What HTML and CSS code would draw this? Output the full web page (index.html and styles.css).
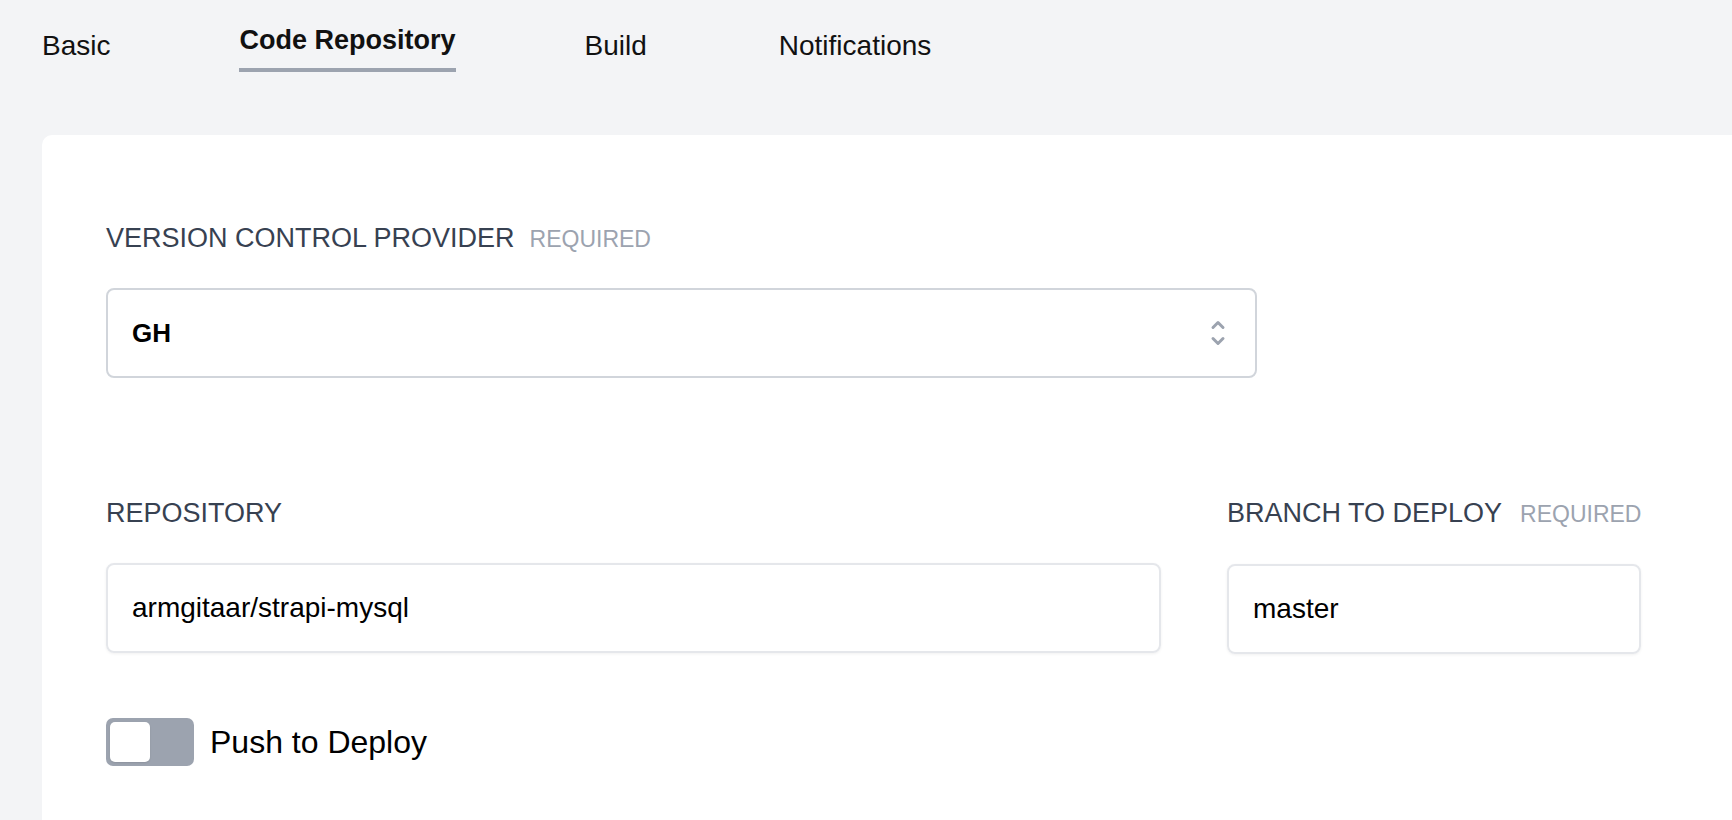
FILE: index.html
```html
<!DOCTYPE html>
<html lang="en">
<head>
<meta charset="utf-8">
<title>Code Repository</title>
<link rel="stylesheet" href="styles.css">
</head>
<body>
<div class="page">
  <nav class="tabs">
    <a class="tab">Basic</a>
    <a class="tab active">Code Repository</a>
    <a class="tab">Build</a>
    <a class="tab">Notifications</a>
  </nav>
  <section class="card">
    <div class="field provider">
      <label class="field-label">VERSION CONTROL PROVIDER <span class="req">REQUIRED</span></label>
      <div class="select">
        <span class="select-value">GH</span>
        <svg class="chevrons" width="16" height="30" viewBox="0 0 16 30" aria-hidden="true">
          <path d="M3 9.5 L8 4.5 L13 9.5" fill="none" stroke="#9ca3af" stroke-width="3" stroke-linecap="round" stroke-linejoin="round"/>
          <path d="M3 20.5 L8 25.5 L13 20.5" fill="none" stroke="#9ca3af" stroke-width="3" stroke-linecap="round" stroke-linejoin="round"/>
        </svg>
      </div>
    </div>
    <div class="row">
      <div class="field">
        <label class="field-label">REPOSITORY</label>
        <div class="input">armgitaar/strapi-mysql</div>
      </div>
      <div class="field">
        <label class="field-label">BRANCH TO DEPLOY <span class="req req-wide">REQUIRED</span></label>
        <div class="input">master</div>
      </div>
    </div>
    <div class="toggle-row">
      <div class="toggle"><div class="knob"></div></div>
      <span class="toggle-label">Push to Deploy</span>
    </div>
  </section>
</div>
</body>
</html>
```
FILE: styles.css
```css
html, body {
  margin: 0;
  padding: 0;
}
body {
  background: #f3f4f6;
  font-family: "Liberation Sans", Arial, sans-serif;
  color: #111;
  overflow: hidden;
}
.page {
  min-height: 820px;
}
.tabs {
  display: flex;
  align-items: flex-start;
  padding: 29px 0 0 42px;
  height: 106px;
}
.tab {
  font-size: 28px;
  line-height: 34px;
  color: #111;
  margin-right: 129px;
}
.tab:nth-child(3) {
  margin-right: 132px;
}
.tab.active {
  font-size: 27px;
  font-weight: 700;
  margin-top: -6px;
  padding-bottom: 11px;
  border-bottom: 4px solid #9ca3af;
}
.card {
  margin-left: 42px;
  background: #fff;
  border-radius: 10px 0 0 0;
  padding: 88px 0 0 64px;
  min-height: 685px;
  box-sizing: border-box;
}
.field {
  display: flex;
  flex-direction: column;
  gap: 35px;
}
.field-label {
  display: flex;
  align-items: baseline;
  gap: 15px;
  font-size: 27px;
  line-height: 30px;
  color: #374151;
  white-space: nowrap;
}
.provider {
  gap: 34px;
}
.req {
  font-size: 23px;
  color: #9ca3af;
}
.req-wide {
  margin-left: 3px;
}
.select {
  width: 1151px;
  height: 90px;
  box-sizing: border-box;
  border: 2px solid #d1d5db;
  border-radius: 8px;
  display: flex;
  align-items: center;
  justify-content: space-between;
  padding: 0 29px 0 24px;
}
.select-value {
  font-size: 26px;
  font-weight: 700;
  color: #000;
}
.chevrons {
  display: block;
}
.row {
  display: grid;
  grid-template-columns: 1055px 414px;
  column-gap: 66px;
  margin-top: 120px;
}
.input {
  height: 90px;
  box-sizing: border-box;
  border: 2px solid #e5e7eb;
  border-radius: 8px;
  box-shadow: 0 1px 3px rgba(0, 0, 0, 0.06);
  display: flex;
  align-items: center;
  padding: 0 24px;
  font-size: 28px;
  color: #000;
}
.toggle-row {
  display: flex;
  align-items: center;
  gap: 16px;
  margin-top: 64px;
}
.toggle {
  width: 88px;
  height: 48px;
  box-sizing: border-box;
  padding: 4px;
  background: #9ca3af;
  border-radius: 7px;
}
.knob {
  width: 40px;
  height: 40px;
  background: #fff;
  border-radius: 5px;
  box-shadow: 0 1px 2px rgba(0, 0, 0, 0.1);
}
.toggle-label {
  font-size: 32px;
  line-height: 48px;
  color: #000;
}
```
